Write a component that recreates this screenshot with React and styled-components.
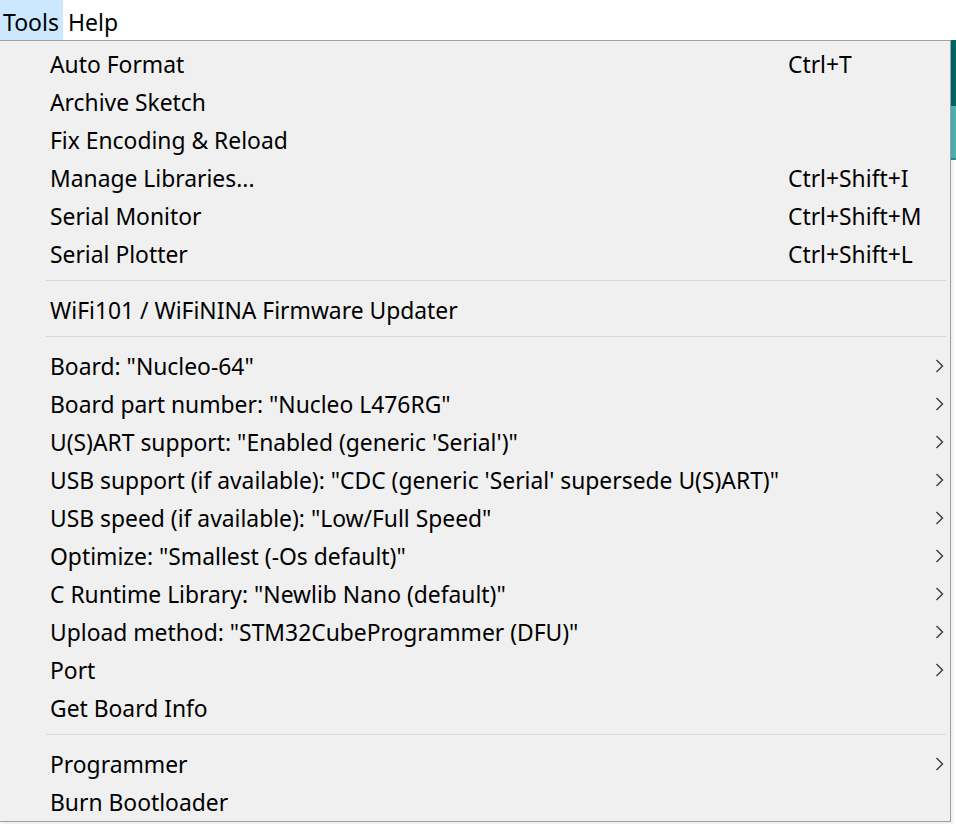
import React from "react";
import styled, { createGlobalStyle } from "styled-components";

const Global = createGlobalStyle`
  html, body { margin: 0; padding: 0; background: #ffffff; }
  body { font-family: "Noto Sans", "Open Sans", sans-serif; }
`;

const Screen = styled.div`
  position: relative;
  width: 956px;
  height: 824px;
  overflow: hidden;
  background: #ffffff;
  font-family: "Noto Sans", "Open Sans", sans-serif;
  color: #000;
`;

const MenuBar = styled.div`
  display: flex;
  height: 40px;
  align-items: stretch;
  background: #ffffff;
`;

const MenuTitle = styled.div`
  display: flex;
  align-items: center;
  padding: 3px ${(p) => (p.$active ? "4px" : "2px")} 0 3px;
  font-size: 23px;
  background: ${(p) => (p.$active ? "#cce8ff" : "transparent")};
  margin-right: ${(p) => (p.$active ? "2px" : "0")};
`;

const Backdrop = styled.div`
  display: flex;
  justify-content: flex-end;
  height: 784px;
`;

const IdeToolbar = styled.div`
  width: 5px;
  display: flex;
  flex-direction: column;
`;

const ToolbarBand = styled.div`
  height: ${(p) => p.$h}px;
  background: ${(p) => p.$c};
  border-bottom: ${(p) => (p.$line ? "2px solid #2c8f93" : "none")};
`;

const Menu = styled.div`
  position: absolute;
  left: -1px;
  top: 40px;
  width: 952px;
  height: 782px;
  box-sizing: border-box;
  background: #f0f0f0;
  border: 1px solid #a0a0a0;
  padding: 5px 0 0 0;
  font-size: 22.85px;
  box-shadow: 2px 2px 3px rgba(0, 0, 0, 0.08);
`;

const Row = styled.div`
  display: grid;
  grid-template-columns: 738px 146px 1fr;
  align-items: center;
  height: 38px;
  padding-left: 50px;
  white-space: nowrap;
`;

const Label = styled.span`
  line-height: 38px;
`;

const Shortcut = styled.span`
  line-height: 38px;
`;

const Arrow = styled.svg`
  width: 10px;
  height: 14px;
  margin-left: 1px;
  margin-top: -3px;
`;

const Separator = styled.div`
  height: 1px;
  background: #d7d7d7;
  margin: 6px 4px 11px 46px;
`;

const BelowText = styled.div`
  position: absolute;
  left: 2px;
  top: 822px;
  font-size: 22px;
  line-height: 22px;
  color: #555;
  white-space: nowrap;
`;

const Chevron = () => (
  <Arrow viewBox="0 0 10 14">
    <polyline points="1.5,1 7.5,7 1.5,13" fill="none" stroke="#3a3a3a" strokeWidth="1.4" />
  </Arrow>
);

const groups = [
  [
    { label: "Auto Format", sc: "Ctrl+T" },
    { label: "Archive Sketch" },
    { label: "Fix Encoding & Reload" },
    { label: "Manage Libraries...", sc: "Ctrl+Shift+I" },
    { label: "Serial Monitor", sc: "Ctrl+Shift+M" },
    { label: "Serial Plotter", sc: "Ctrl+Shift+L" },
  ],
  [{ label: "WiFi101 / WiFiNINA Firmware Updater" }],
  [
    { label: 'Board: "Nucleo-64"', sub: true },
    { label: 'Board part number: "Nucleo L476RG"', sub: true },
    { label: "U(S)ART support: \"Enabled (generic 'Serial')\"", sub: true },
    { label: "USB support (if available): \"CDC (generic 'Serial' supersede U(S)ART)\"", sub: true },
    { label: 'USB speed (if available): "Low/Full Speed"', sub: true },
    { label: 'Optimize: "Smallest (-Os default)"', sub: true },
    { label: 'C Runtime Library: "Newlib Nano (default)"', sub: true },
    { label: 'Upload method: "STM32CubeProgrammer (DFU)"', sub: true },
    { label: "Port", sub: true },
    { label: "Get Board Info" },
  ],
  [
    { label: "Programmer", sub: true },
    { label: "Burn Bootloader" },
  ],
];

export default function App() {
  return (
    <>
      <Global />
      <Screen>
        <MenuBar>
          <MenuTitle $active>Tools</MenuTitle>
          <MenuTitle>Help</MenuTitle>
        </MenuBar>
        <Backdrop>
          <IdeToolbar>
            <ToolbarBand $h={66} $c="#00676b" />
            <ToolbarBand $h={52} $c="#4fb3b6" $line />
          </IdeToolbar>
        </Backdrop>
        <BelowText>#define LED</BelowText>
        <Menu>
          {groups.map((g, gi) => (
            <React.Fragment key={gi}>
              {gi > 0 && <Separator />}
              {g.map((it) => (
                <Row key={it.label}>
                  <Label>{it.label}</Label>
                  <Shortcut>{it.sc || ""}</Shortcut>
                  {it.sub ? <Chevron /> : <span />}
                </Row>
              ))}
            </React.Fragment>
          ))}
        </Menu>
      </Screen>
    </>
  );
}
